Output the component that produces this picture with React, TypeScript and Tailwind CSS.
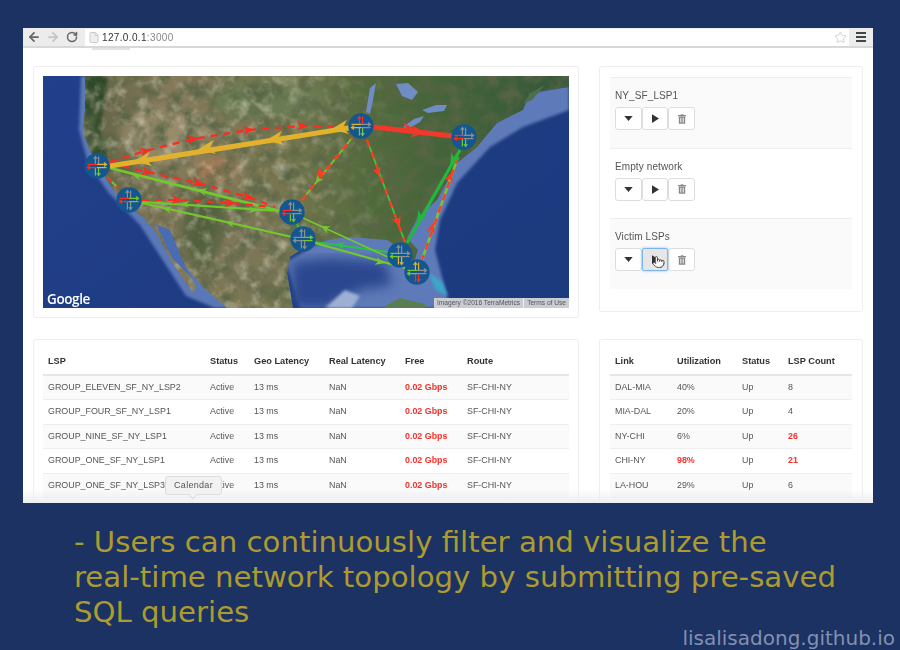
import { ArrowLeft, ArrowRight, File, Pointer, RotateCw, Star } from 'lucide-react';

type LspRow = { name: string; status: string; geo: string; real: string; free: string; route: string };
type LinkRow = { link: string; util: string; status: string; count: string; hotUtil?: boolean; hotCount?: boolean };

const lspRows: LspRow[] = [
  { name: 'GROUP_ELEVEN_SF_NY_LSP2', status: 'Active', geo: '13 ms', real: 'NaN', free: '0.02 Gbps', route: 'SF-CHI-NY' },
  { name: 'GROUP_FOUR_SF_NY_LSP1', status: 'Active', geo: '13 ms', real: 'NaN', free: '0.02 Gbps', route: 'SF-CHI-NY' },
  { name: 'GROUP_NINE_SF_NY_LSP1', status: 'Active', geo: '13 ms', real: 'NaN', free: '0.02 Gbps', route: 'SF-CHI-NY' },
  { name: 'GROUP_ONE_SF_NY_LSP1', status: 'Active', geo: '13 ms', real: 'NaN', free: '0.02 Gbps', route: 'SF-CHI-NY' },
  { name: 'GROUP_ONE_SF_NY_LSP3', status: 'Active', geo: '13 ms', real: 'NaN', free: '0.02 Gbps', route: 'SF-CHI-NY' },
];

const linkRows: LinkRow[] = [
  { link: 'DAL-MIA', util: '40%', status: 'Up', count: '8' },
  { link: 'MIA-DAL', util: '20%', status: 'Up', count: '4' },
  { link: 'NY-CHI', util: '6%', status: 'Up', count: '26', hotCount: true },
  { link: 'CHI-NY', util: '98%', status: 'Up', count: '21', hotUtil: true, hotCount: true },
  { link: 'LA-HOU', util: '29%', status: 'Up', count: '6' },
];

// [points, colour, width, dashed]
const links: [string, string, number, boolean][] = [
  ['107,177 118,188', '#6fc42c', 2, false],
  ['107,177 118,188', '#ff2a20', 2, true],
  ['110,168 280,211', '#74c82e', 2.8, false],
  ['110,163 147,172 198,183 248,197 275,207', '#ff2a20', 2.2, true],
  ['142,202 280,211', '#6ccb2c', 2.2, false],
  ['142,200 177,200 230,203 272,207', '#ff2a20', 2.2, true],
  ['142,203 292,237', '#74c82e', 2.2, false],
  ['110,162 145,151 193,139 248,130 302,126 350,126', '#ff2a20', 2.2, true],
  ['361,126 110,166', '#e2b22e', 5, false],
  ['302,200 352,138', '#74c82e', 1.8, false],
  ['302,200 352,138', '#ff3a20', 2.2, true],
  ['367,140 405,242', '#3cc83a', 1.8, false],
  ['367,140 405,242', '#ff3a20', 2.2, true],
  ['460,150 407,243', '#22b83e', 3.2, false],
  ['458,157 422,260', '#7cc03c', 2.6, false],
  ['458,157 422,260', '#ff3a20', 2.2, true],
  ['373,127 453,136', '#f0392a', 5, false],
  ['315,242 388,252', '#2cc23e', 2.2, false],
  ['315,243 405,268', '#74c82e', 2.2, false],
  ['303,218 390,258', '#74c82e', 1.7, false],
  ['297,222 298,228', '#3cb83a', 2, false],
];

// [x, y, angle, colour, size]
const arrows: [number, number, number, string, number][] = [
  [145, 151, -15, '#ff2a20', 1],
  [193, 139, -10, '#ff2a20', 1],
  [248, 130, -5, '#ff2a20', 1],
  [302, 126, -3, '#ff2a20', 1],
  [147, 172, 12, '#ff2a20', 1],
  [198, 183, 14, '#ff2a20', 1],
  [248, 197, 14, '#ff2a20', 1],
  [177, 200, 2, '#ff2a20', 1],
  [230, 203, 2, '#ff2a20', 1],
  [137, 176, 194, '#74c82e', 0.8],
  [202, 191, 194, '#74c82e', 0.9],
  [185, 204, 184, '#6ccb2c', 0.8],
  [253, 210, 4, '#6ccb2c', 0.8],
  [167, 209, 193, '#74c82e', 0.8],
  [230, 223, 193, '#74c82e', 0.8],
  [143, 160, 172, '#e2b22e', 1.6],
  [207, 148, 172, '#e2b22e', 1.6],
  [275, 139, 172, '#e2b22e', 1.6],
  [340, 128, 172, '#e2b22e', 1.6],
  [320, 173, 129, '#ff3a20', 1],
  [318, 180, 129, '#74c82e', 0.8],
  [378, 172, 70, '#ff3a20', 0.9],
  [398, 222, 70, '#ff3a20', 1],
  [453, 160, 120, '#22b83e', 1.1],
  [420, 218, 120, '#22b83e', 1.2],
  [450, 177, -70, '#ff3a20', 1],
  [432, 228, -70, '#ff3a20', 1],
  [408, 128, 6, '#f0392a', 1.1],
  [418, 132, 6, '#f0392a', 1.4],
  [340, 245, 187, '#2cc23e', 0.9],
  [380, 262, 15, '#74c82e', 0.9],
  [325, 228, 205, '#74c82e', 0.9],
  [395, 252, 8, '#2cc23e', 0.8],
];

// [x, y, right, left, up, down]
const nodes: [number, number, string, string, string, string][] = [
  [97, 166, '#e2b22e', '#ff2a20', '#8a8f8f', '#74c82e'],
  [129, 200, '#74c82e', '#ff2a20', '#8a8f8f', '#8a8f8f'],
  [292, 212, '#8a8f8f', '#ff2a20', '#8a8f8f', '#74c82e'],
  [303, 239, '#74c82e', '#8a8f8f', '#8a8f8f', '#8a8f8f'],
  [361, 126, '#8a8f8f', '#e2b22e', '#ff2a20', '#74c82e'],
  [464, 137, '#8a8f8f', '#ff2a20', '#8a8f8f', '#74c82e'],
  [400, 255, '#8a8f8f', '#74c82e', '#8a8f8f', '#e2b22e'],
  [417, 272, '#8a8f8f', '#74c82e', '#e2b22e', '#ff2a20'],
];

const landPath =
  'M85 76 L85 110 L83 133 L93 157 L107 180 L120 200 L143 217 L156 232 L172 262 L193 293 L196 286 L178 256 L158 224 L177 257 L203 287 L227 308 L293 308 L287 273 L290 257 L313 242 L350 237 L387 240 L403 250 L414 262 L418 250 L407 238 L418 217 L437 200 L457 163 L477 147 L497 123 L523 110 L530 93 L569 87 L569 76 Z';

const Arrowhead = ({ x, y, angle, color, size }: { x: number; y: number; angle: number; color: string; size: number }) => (
  <path d="M5.5 0 L-5 -4.5 L-2 0 L-5 4.5 Z" fill={color} transform={`translate(${x} ${y}) rotate(${angle}) scale(${size})`} />
);

const RouterNode = ({ x, y, right, left, up, down }: { x: number; y: number; right: string; left: string; up: string; down: string }) => (
  <g transform={`translate(${x} ${y})`}>
    <circle r="12.7" fill="#14568f" />
    <g fill="none" strokeWidth="1.2">
      <path d="M-1.6 -1.6 V-9.5 M-3.4 -7 L-1.6 -9.5 L0.2 -7" stroke={up} />
      <path d="M1.6 -1.6 V-9.5" stroke={up} />
      <path d="M1.6 1.6 V9.5 M-0.2 7 L1.6 9.5 L3.4 7" stroke={down} />
      <path d="M-1.6 1.6 V9.5" stroke={down} />
      <path d="M0 -1.6 H9.5 M7 -3.4 L9.5 -1.6 L7 0.2" stroke={right} />
      <path d="M0 1.6 H9.5" stroke={right} />
      <path d="M0 1.6 H-9.5 M-7 -0.2 L-9.5 1.6 L-7 3.4" stroke={left} />
      <path d="M0 -1.6 H-9.5" stroke={left} />
    </g>
  </g>
);

const NetworkMap = () => (
  <svg viewBox="43 76 526 232" className="block w-[526px] h-[232px] blur-[0.5px]">
    <defs>
      <linearGradient id="land" x1="0" x2="1" y1="0" y2="0">
        <stop offset="0" stopColor="#5f6244" />
        <stop offset="0.18" stopColor="#85795a" />
        <stop offset="0.42" stopColor="#76764f" />
        <stop offset="0.6" stopColor="#4f6a3a" />
        <stop offset="1" stopColor="#33573a" />
      </linearGradient>
      <linearGradient id="ocean" x1="0" x2="1" y1="0" y2="0.6">
        <stop offset="0" stopColor="#223f8c" />
        <stop offset="1" stopColor="#1c3a7e" />
      </linearGradient>
      <linearGradient id="westFade" x1="0" x2="1" y1="0" y2="0">
        <stop offset="0" stopColor="#ffffff" />
        <stop offset="0.45" stopColor="#ffffff" />
        <stop offset="0.7" stopColor="#000000" />
      </linearGradient>
      <mask id="westMask">
        <rect x="43" y="76" width="526" height="232" fill="url(#westFade)" />
      </mask>
      <filter id="grain" x="0" y="0" width="100%" height="100%">
        <feTurbulence type="fractalNoise" baseFrequency="0.06" numOctaves="4" seed="7" />
        <feColorMatrix values="0 0 0 0 0.1  0 0 0 0 0.13  0 0 0 0 0.06  2.4 0 0 0 -0.95" />
        <feGaussianBlur stdDeviation="0.7" />
      </filter>
      <filter id="grainLight" x="0" y="0" width="100%" height="100%">
        <feTurbulence type="fractalNoise" baseFrequency="0.08" numOctaves="3" seed="21" />
        <feColorMatrix values="0 0 0 0 0.78  0 0 0 0 0.72  0 0 0 0 0.58  2.4 0 0 0 -1.15" />
        <feGaussianBlur stdDeviation="0.7" />
      </filter>
      <filter id="soft"><feGaussianBlur stdDeviation="6" /></filter>
      <filter id="softer"><feGaussianBlur stdDeviation="1.5" /></filter>
      <clipPath id="landClip">
        <path d={landPath} />
      </clipPath>
    </defs>
    <rect x="43" y="76" width="526" height="232" fill="url(#ocean)" />
    {/* atlantic shelf */}
    <path d="M569 84 L569 110 L523 127 L490 147 L457 183 L440 220 L435 250 L450 308 L300 308 L286 262 L350 225 L420 170 L500 100 Z" fill="#5f7ab8" filter="url(#softer)" />
    {/* gulf deep water */}
    <path d="M292 262 L330 258 L385 262 L392 285 L360 290 L325 308 L292 308 Z" fill="#2a468f" filter="url(#soft)" />
    {/* pacific shelf, thin */}
    <path d="M81 76 L79 130 L88 163 L108 192 L140 225 L186 296 L215 308 L232 308 L200 280 L150 215 L100 150 L90 76 Z" fill="#5a78b8" filter="url(#softer)" />
    <path d={landPath} fill="url(#land)" />
    <g clipPath="url(#landClip)">
      <path d="M85 76 L108 76 L100 130 L112 172 L95 160 L84 130 Z" fill="#2f4a2b" filter="url(#softer)" />
      <ellipse cx="165" cy="135" rx="45" ry="28" fill="#a49878" filter="url(#soft)" opacity="0.6" />
      <ellipse cx="205" cy="230" rx="22" ry="40" fill="#52603c" filter="url(#soft)" />
      <ellipse cx="270" cy="100" rx="60" ry="20" fill="#6a7c52" filter="url(#soft)" />
      <ellipse cx="215" cy="170" rx="22" ry="12" fill="#a67a58" filter="url(#soft)" />
      <ellipse cx="250" cy="255" rx="35" ry="40" fill="#7a7656" filter="url(#soft)" />
      <rect x="43" y="76" width="526" height="232" filter="url(#grain)" />
      <g mask="url(#westMask)">
        <rect x="43" y="76" width="526" height="232" filter="url(#grainLight)" opacity="0.5" />
      </g>
    </g>
    <path d="M156 224 L170 230 L186 268 L192 278 L172 258 Z" fill="#4a6cb2" />
    <path d="M366 112 L370 88 L376 83 L373 100 L370 114 Z" fill="#6f8cc4" />
    <path d="M396 84 L408 83 L418 92 L412 100 L402 96 Z" fill="#6f8cc4" />
    <path d="M403 127 L414 119 L424 116 L420 122 L408 129 Z" fill="#6f8cc4" />
    <path d="M422 110 L436 105 L447 105 L444 111 L428 113 Z" fill="#6f8cc4" />
    <path d="M523 104 L532 92 L545 85 L532 100 Z" fill="#4f6f4a" />
    <path d="M385 306 L400 298 L425 304 L425 308 L385 308 Z" fill="#5b7d52" />
    <path d="M325 308 L345 290 L360 296 L352 308 Z" fill="#9db0d4" filter="url(#softer)" />
    <path d="M428 272 L442 282 L448 296 L436 290 Z" fill="#39a9c9" filter="url(#softer)" />
    {links.map(([points, color, width, dashed], i) => (
      <polyline key={i} points={points} fill="none" stroke={color} strokeWidth={width} strokeDasharray={dashed ? '7 6' : undefined} />
    ))}
    {arrows.map(([x, y, angle, color, size], i) => (
      <Arrowhead key={i} x={x} y={y} angle={angle} color={color} size={size} />
    ))}
    {nodes.map(([x, y, right, left, up, down], i) => (
      <RouterNode key={i} x={x} y={y} right={right} left={left} up={up} down={down} />
    ))}
  </svg>
);

const NetworkMapWithCredits = () => (
  <div className="relative w-[526px] h-[232px] overflow-hidden">
    <NetworkMap />
    <span className="absolute left-[4px] bottom-[1px] text-[13.5px] leading-[16px] text-white font-['Open_Sans',sans-serif] font-semibold tracking-[-0.4px]">Google</span>
    <div className="absolute right-0 bottom-0 h-[10px] flex items-center bg-[#c9ccd3] text-[6.6px] text-[#555]">
      <span className="px-[3px]">Imagery ©2016 TerraMetrics</span>
      <span className="px-[3px] border-l border-[#eeeeee]">Terms of Use</span>
    </div>
  </div>
);

const QueryCaret = () => <svg viewBox="0 0 10 6" className="w-[9px] h-[5px] fill-[#333]"><path d="M0 0 H10 L5 6 Z" /></svg>;
const QueryPlay = () => <svg viewBox="0 0 8 10" className="w-[7px] h-[9px] fill-[#333]"><path d="M0 0 L8 5 L0 10 Z" /></svg>;

const QueryTrash = () => (
  <svg viewBox="0 0 10 12" className="w-[8px] h-[10px] fill-[#888]">
    <path d="M3.5 0 H6.5 V1 H10 V2.5 H0 V1 H3.5 Z" />
    <path d="M1 3 H9 V12 H1 Z M2.7 4.5 V10.5 H3.5 V4.5 Z M4.6 4.5 V10.5 H5.4 V4.5 Z M6.5 4.5 V10.5 H7.3 V4.5 Z" fillRule="evenodd" />
  </svg>
);

const QueryItem = ({ label, active, striped }: { label: string; active?: boolean; striped?: boolean }) => (
  <div className={`h-[70.5px] border-t border-[#eeeeee] pl-[5px] pt-[11px] ${striped ? 'bg-[#fafafa]' : 'bg-white'}`}>
    <div className="text-[10px] leading-[13px] text-[#555] tracking-[0.1px]">{label}</div>
    <div className="flex mt-[5px]">
      <div className="w-[27px] h-[23px] flex items-center justify-center bg-white border border-[#dddddd] rounded-[3px]"><QueryCaret /></div>
      {active ? (
        <div className="relative w-[26px] h-[23px] z-10 flex items-center justify-center bg-[#e6e6e6] border border-[#7db4ee] rounded-[2px] shadow-[0_0_3px_#8fc0f5]">
          <QueryPlay />
          <Pointer className="absolute left-[9px] top-[6px] w-[13px] h-[14px] fill-white text-[#333]" strokeWidth={1.6} />
        </div>
      ) : (
        <div className="w-[26px] h-[23px] flex items-center justify-center bg-white border border-[#dddddd] rounded-[3px]"><QueryPlay /></div>
      )}
      <div className="w-[27px] h-[23px] flex items-center justify-center bg-white border border-[#dddddd] rounded-[3px]"><QueryTrash /></div>
    </div>
  </div>
);

const App = () => {
  return (
    <div className="w-[900px] h-[650px] overflow-hidden bg-[#1b3263] pt-[28px] flex flex-col font-['Liberation_Sans',Arial,sans-serif]">
      <div className="relative ml-[23px] w-[850px] h-[475px] shrink-0 overflow-hidden bg-white blur-[0.4px]">
        <div className="h-[20px] bg-[#ececec] border-b-[2px] border-[#d8d8d8] flex items-center">
          <ArrowLeft className="ml-[4px] w-[14px] h-[14px] text-[#666]" strokeWidth={3} />
          <ArrowRight className="ml-[5px] w-[14px] h-[14px] text-[#c4c4c4]" strokeWidth={3} />
          <RotateCw className="ml-[6px] w-[12px] h-[12px] text-[#666]" strokeWidth={3} />
          <div className="ml-[7px] flex-1 h-[17px] bg-white flex items-center pl-[3px]">
            <File className="w-[12px] h-[13px] text-[#ccc] fill-[#eee]" />
            <span className="ml-[2px] text-[10px] text-[#333] tracking-[0.35px]">127.0.0.1<span className="text-[#888]">:3000</span></span>
            <Star className="ml-auto mr-[2px] w-[13px] h-[13px] text-[#c8c8c8]" strokeWidth={1.5} />
          </div>
          <div className="w-[24px] flex flex-col items-center gap-[2px]">
            <div className="w-[10px] h-[2px] bg-[#444]" />
            <div className="w-[10px] h-[2px] bg-[#444]" />
            <div className="w-[10px] h-[2px] bg-[#444]" />
          </div>
        </div>
        <div className="ml-[69px] w-[38px] h-[2px] bg-[#e4e4e4]" />

        <div className="flex gap-[20px] pl-[10px] pt-[16px]">
          <div className="w-[546px] h-[252px] p-[9px] border border-[#eeeeee] rounded-[3px] bg-white">
            <NetworkMapWithCredits />
          </div>
          <div className="w-[264px] h-[246px] px-[10px] pt-[10px] border border-[#eeeeee] rounded-[3px] bg-white">
            <QueryItem label="NY_SF_LSP1" striped />
            <QueryItem label="Empty network" />
            <QueryItem label="Victim LSPs" active striped />
          </div>
        </div>

        <div className="flex gap-[20px] pl-[10px] mt-[21px]">
          <div className="w-[546px] h-[180px] px-[9px] pt-[10px] border border-[#eeeeee] rounded-[3px] bg-white">
            <table className="w-full table-fixed border-collapse text-[8.9px] text-[#555]">
              <thead>
                <tr className="h-[25px] border-b-2 border-[#e6e6e6] text-left text-[9.2px] text-[#333]">
                  <th className="w-[162px] pl-[5px] font-bold">LSP</th>
                  <th className="w-[44px] pl-[5px] font-bold">Status</th>
                  <th className="w-[75px] pl-[5px] font-bold">Geo Latency</th>
                  <th className="w-[76px] pl-[5px] font-bold">Real Latency</th>
                  <th className="w-[62px] pl-[5px] font-bold">Free</th>
                  <th className="pl-[5px] font-bold">Route</th>
                </tr>
              </thead>
              <tbody>
                {lspRows.map((row, i) => (
                  <tr key={row.name} className={`h-[24.5px] border-b border-[#eeeeee] ${i % 2 === 0 ? 'bg-[#fafafa]' : 'bg-white'}`}>
                    <td className="pl-[5px]">{row.name}</td>
                    <td className="pl-[5px]">{row.status}</td>
                    <td className="pl-[5px]">{row.geo}</td>
                    <td className="pl-[5px]">{row.real}</td>
                    <td className="pl-[5px] font-bold text-[#f5302a]">{row.free}</td>
                    <td className="pl-[5px]">{row.route}</td>
                  </tr>
                ))}
              </tbody>
            </table>
          </div>
          <div className="w-[264px] h-[180px] px-[10px] pt-[10px] border border-[#eeeeee] rounded-[3px] bg-white">
            <table className="w-full table-fixed border-collapse text-[8.9px] text-[#555]">
              <thead>
                <tr className="h-[25px] border-b-2 border-[#e6e6e6] text-left text-[9.2px] text-[#333]">
                  <th className="w-[62px] pl-[5px] font-bold">Link</th>
                  <th className="w-[65px] pl-[5px] font-bold">Utilization</th>
                  <th className="w-[46px] pl-[5px] font-bold">Status</th>
                  <th className="pl-[5px] font-bold">LSP Count</th>
                </tr>
              </thead>
              <tbody>
                {linkRows.map((row, i) => (
                  <tr key={row.link} className={`h-[24.5px] border-b border-[#eeeeee] ${i % 2 === 0 ? 'bg-[#fafafa]' : 'bg-white'}`}>
                    <td className="pl-[5px]">{row.link}</td>
                    <td className={`pl-[5px] ${row.hotUtil ? 'font-bold text-[#f5302a]' : ''}`}>{row.util}</td>
                    <td className="pl-[5px]">{row.status}</td>
                    <td className={`pl-[5px] ${row.hotCount ? 'font-bold text-[#f5302a]' : ''}`}>{row.count}</td>
                  </tr>
                ))}
              </tbody>
            </table>
          </div>
        </div>

        <div className="absolute left-0 right-0 bottom-0 h-[14px] bg-gradient-to-b from-transparent to-[#eeeef2]" />
        <div className="absolute left-[142px] top-[448px] w-[57px] h-[19px] flex items-center justify-center bg-[#f2f2f2] border border-[#dddddd] rounded-[3px] text-[9px] text-[#555] tracking-[0.3px]">
          Calendar
          <div className="absolute left-[24px] -bottom-[4px] w-[6px] h-[6px] rotate-45 bg-[#f2f2f2] border-r border-b border-[#dddddd]" />
        </div>
      </div>

      <div className="ml-[74px] mt-[22px] h-[102px] shrink-0 text-[29.2px] leading-[35px] text-[#ad9b30] font-['DejaVu_Sans',sans-serif]">
        <div>- Users can continuously filter and visualize the</div>
        <div>real-time network topology by submitting pre-saved</div>
        <div>SQL queries</div>
      </div>
      <div className="self-end mr-[5px] text-[20px] leading-[22px] text-[#8390b2] font-['DejaVu_Sans',sans-serif]">lisalisadong.github.io</div>
    </div>
  );
};

export default App;
